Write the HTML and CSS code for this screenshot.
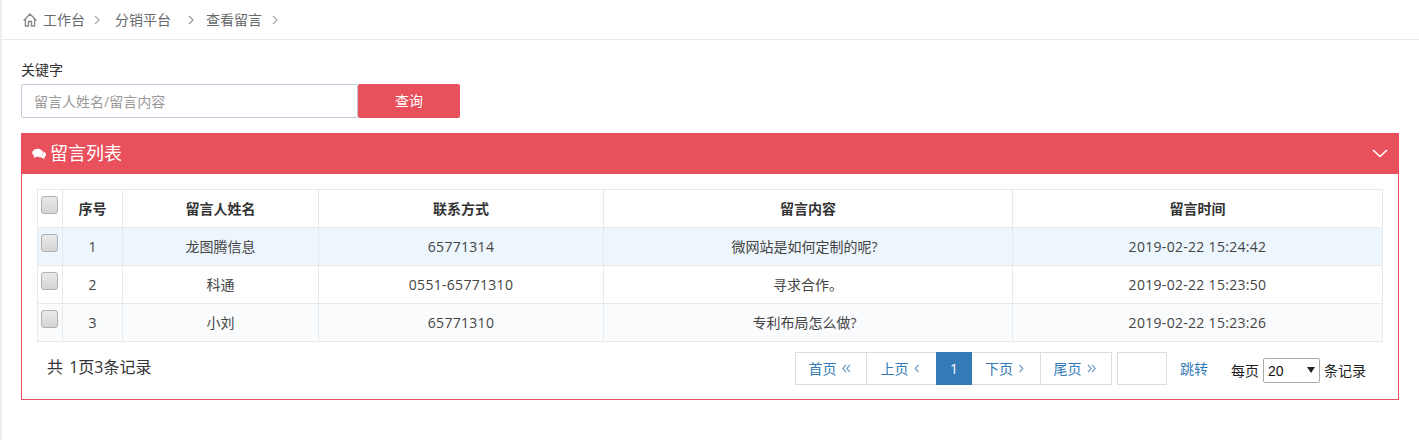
FILE: index.html
```html
<!DOCTYPE html>
<html lang="zh">
<head>
<meta charset="utf-8">
<title>查看留言</title>
<link rel="stylesheet" href="styles.css">
</head>
<body>
<div class="page">
  <nav class="crumbs">
    <svg class="home" width="14" height="14" viewBox="0 0 14 14"><path d="M.6 7.400 7 1l6.400 6.400M2.400 5.800V13H5.500V8.500H8.500V13H11.600V5.800" fill="none" stroke="#8c8c8c" stroke-width="1.400"/></svg>
    <a class="c1">工作台</a><svg class="sep s1" width="6" height="10" viewBox="0 0 6 10"><path d="M1 1l4 4-4 4" fill="none" stroke="#aaa" stroke-width="1.200"/></svg>
    <a class="c2">分销平台</a><svg class="sep s2" width="6" height="10" viewBox="0 0 6 10"><path d="M1 1l4 4-4 4" fill="none" stroke="#999" stroke-width="1.200"/></svg>
    <a class="c3">查看留言</a><svg class="sep s3" width="6" height="10" viewBox="0 0 6 10"><path d="M1 1l4 4-4 4" fill="none" stroke="#aaa" stroke-width="1.200"/></svg>
  </nav>
  <main class="content">
    <label class="kw-label">关键字</label>
    <form class="search">
      <input class="kw" placeholder="留言人姓名/留言内容">
      <button type="button" class="query">查询</button>
    </form>
    <section class="panel">
      <header class="panel-head">
        <div class="title">
          <svg width="14" height="12" viewBox="0 0 14 12"><ellipse cx="5.600" cy="4.800" rx="5.400" ry="4" fill="#fff"/><path d="M2.500 7.500 1.600 10 5 8.400z" fill="#fff"/><path d="M11.400 3.400C13 4 14 5.100 14 6.500c0 1.200-.7 2.100-1.800 2.800l.8 2-3-1.600c-1.600 0-3-.4-3.900-1.200 3 0 5.800-1.500 5.300-5.100z" fill="#fff"/></svg>
          <span>留言列表</span>
        </div>
        <svg class="chev" width="16" height="9" viewBox="0 0 16 9"><path d="M1 1l7 6.500L15 1" fill="none" stroke="#fff" stroke-width="1.600"/></svg>
      </header>
      <div class="panel-body">
        <table class="grid">
          <colgroup><col class="w0"><col class="w1"><col class="w2"><col class="w3"><col class="w4"><col class="w5"></colgroup>
          <thead>
            <tr><th class="ck"><i class="box"></i></th><th>序号</th><th>留言人姓名</th><th>联系方式</th><th>留言内容</th><th>留言时间</th></tr>
          </thead>
          <tbody>
            <tr class="hl"><td class="ck"><i class="box"></i></td><td>1</td><td>龙图腾信息</td><td class="num">65771314</td><td class="q">微网站是如何定制的呢?</td><td class="num">2019-02-22 15:24:42</td></tr>
            <tr><td class="ck"><i class="box"></i></td><td>2</td><td>科通</td><td class="num">0551-65771310</td><td>寻求合作。</td><td class="num">2019-02-22 15:23:50</td></tr>
            <tr class="alt"><td class="ck"><i class="box"></i></td><td>3</td><td>小刘</td><td class="num">65771310</td><td class="q">专利布局怎么做?</td><td class="num">2019-02-22 15:23:26</td></tr>
          </tbody>
        </table>
        <div class="foot">
          <div class="total">共 1页3条记录</div>
          <div class="pager">
            <a class="pg p1">首页<svg width="9" height="9" viewBox="0 0 9 9"><path d="M4 .8.8 4.500 4 8.200M8 .8 4.800 4.500 8 8.200" fill="none" stroke="#6d9cc8" stroke-width="1.200"/></svg></a>
            <a class="pg p2">上页<svg width="6" height="9" viewBox="0 0 6 9"><path d="M4.500.8 1.300 4.500 4.500 8.200" fill="none" stroke="#6d9cc8" stroke-width="1.200"/></svg></a>
            <a class="pg cur">1</a>
            <a class="pg p4">下页<svg width="6" height="9" viewBox="0 0 6 9"><path d="M1.500.8 4.700 4.500 1.500 8.200" fill="none" stroke="#6d9cc8" stroke-width="1.200"/></svg></a>
            <a class="pg p5">尾页<svg width="9" height="9" viewBox="0 0 9 9"><path d="M1 .8 4.200 4.500 1 8.200M5 .8 8.200 4.500 5 8.200" fill="none" stroke="#6d9cc8" stroke-width="1.200"/></svg></a>
            <input class="jump">
            <a class="go">跳转</a>
            <span class="per">每页</span>
            <span class="size-wrap"><select class="size"><option>20</option></select><i class="tri"></i></span>
            <span class="rec">条记录</span>
          </div>
        </div>
      </div>
    </section>
  </main>
</div>
</body>
</html>
```
FILE: styles.css
```css
* { box-sizing: border-box; }
html, body { margin: 0; padding: 0; background: #fff; }
body { font: 14px/1.42857 "Open Sans", "Noto Sans CJK SC", sans-serif; color: #333; height: 440px; overflow: hidden; }
.page { border-left: 2px solid #eee; height: 440px; }
.crumbs { height: 40px; border-bottom: 1px solid #e7eaec; display: flex; align-items: center; padding-left: 21px; color: #676a6c; }
.home { margin-right: 6px; }
.sep { margin-left: 9px; margin-right: 15px; }
.s2 { margin-left: 17px; margin-right: 12px; }
.s3 { margin-left: 10px; margin-right: 0; }
.content { padding: 20px 19px 0; }
.kw-label { display: block; line-height: 20px; color: #333; margin-bottom: 4px; }
.search { display: flex; }
.kw { width: 337px; height: 34px; border: 1px solid #c2c9d8; border-radius: 2px; padding: 0 12px; font: inherit; outline: 0; }
.kw::placeholder { color: #999; }
.query { width: 102px; height: 34px; background: #e8505c; color: #fff; border: 0; border-radius: 2px; font: inherit; }
.panel { margin-top: 15px; width: 1378px; height: 267px; border: 1px solid #e8505c; }
.panel-head { height: 41px; margin: -1px -1px 0; background: #e8505c; color: #fff; display: flex; align-items: center; justify-content: space-between; padding: 0 11px; }
.title { display: flex; align-items: center; gap: 4px; font-size: 18px; }
.title svg { margin-top: 2px; }
.panel-body { padding: 15px 15px 0; }
.grid { width: 1345px; table-layout: fixed; border-collapse: collapse; }
.w0 { width: 25px; } .w1 { width: 60px; } .w2 { width: 196px; } .w3 { width: 285px; } .w4 { width: 409px; } .w5 { width: 370px; }
.grid th, .grid td { height: 38px; border: 1px solid #e7eaec; text-align: center; padding: 0; font-size: 14px; vertical-align: middle; }
.grid th { color: #333; font-weight: 700; }
.grid td { color: #444; }
.grid .num { letter-spacing: .3px; }
.grid .q { padding-right: 7px; }
.grid .ck { vertical-align: top; text-align: left; padding: 6px 0 0 3px; }
.hl td { background: #edf6fd; }
.alt td { background: #fafbfd; }
.box { display: block; width: 17px; height: 18px; border: 1px solid #b0b0b0; border-radius: 3px; background: linear-gradient(#eaeaea, #d4d4d4); }
.foot { display: flex; justify-content: space-between; margin-top: 10px; padding-left: 10px; }
.total { font-size: 16px; line-height: 1; margin-top: 7px; color: #333; word-spacing: 2px; }
.pager { display: flex; align-items: flex-start; padding-right: 17px; }
.pg { height: 33px; border: 1px solid #ddd; margin-left: -1px; padding-right: 3px; color: #337ab7; line-height: 31px; display: flex; align-items: center; justify-content: center; gap: 5px; }
.p1 { width: 72px; margin-left: 0; } .p2 { width: 71px; } .cur { position: relative; width: 36px; padding: 0; background: #337ab7; border-color: #337ab7; color: #fff; } .p4 { width: 70px; } .p5 { width: 72px; }
.jump { width: 50px; height: 33px; margin-left: 5px; border: 1px solid #ddd; outline: 0; }
.go { margin-left: 13px; color: #337ab7; line-height: 33px; }
.per { margin-left: 23px; color: #222; line-height: 38px; }
.size-wrap { position: relative; width: 57px; height: 25px; margin: 6px 4px 0; }
.size { display: block; width: 57px; height: 25px; appearance: none; -webkit-appearance: none; padding: 0 0 0 4px; font: 14px "Liberation Sans", sans-serif; color: #111; background: #fff; border: 1px solid #aaa; border-radius: 2px; }
.tri { position: absolute; left: 44px; top: 9px; border: 4px solid transparent; border-top: 6px solid #222; border-bottom: 0; }
.rec { color: #222; line-height: 38px; }
```
